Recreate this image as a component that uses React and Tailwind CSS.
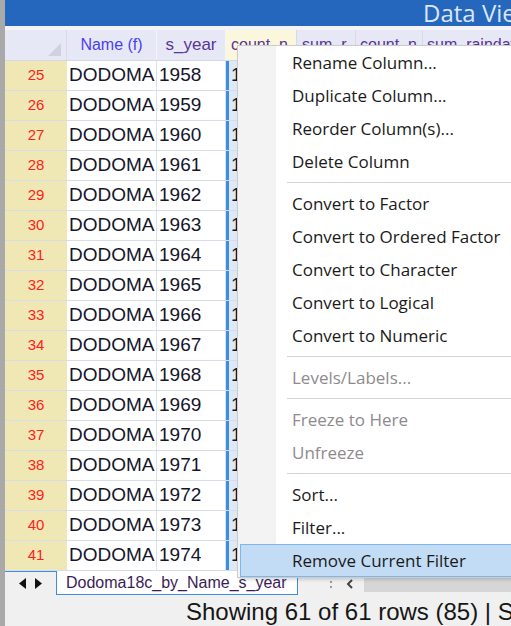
import React from 'react';

const rows = Array.from({ length: 17 }, (_, i) => ({ n: 25 + i, year: 1958 + i }));

// menu groups, separated by a line
const menuGroups = [
  [
    { label: 'Rename Column...' },
    { label: 'Duplicate Column...' },
    { label: 'Reorder Column(s)...' },
    { label: 'Delete Column' },
  ],
  [
    { label: 'Convert to Factor' },
    { label: 'Convert to Ordered Factor' },
    { label: 'Convert to Character' },
    { label: 'Convert to Logical' },
    { label: 'Convert to Numeric' },
  ],
  [{ label: 'Levels/Labels...', disabled: true }],
  [
    { label: 'Freeze to Here', disabled: true },
    { label: 'Unfreeze', disabled: true },
  ],
  [
    { label: 'Sort...' },
    { label: 'Filter...' },
    { label: 'Remove Current Filter', active: true },
  ],
];

function ContextMenu() {
  return (
    <div className="absolute left-[237px] top-[45px] w-[300px] border border-[#cccccc] bg-white font-['Open_Sans',sans-serif] text-[17px] shadow-[2px_2px_3px_rgba(0,0,0,0.15)]">
      <div className="relative">
        <div className="absolute inset-y-0 left-0 w-[38px] bg-[#f3f3f3]" />
        {menuGroups.map((group, gi) => (
          <div key={gi} className="relative">
            {gi > 0 && (
              <div className="flex h-[9px] items-center pl-[49px]">
                <div className="h-px w-full bg-[#d4d4d4]" />
              </div>
            )}
            {group.map((item) => (
              <div
                key={item.label}
                className={`mx-[2px] flex h-[33px] items-center border pl-[51px] ${
                  item.active ? 'border-[#7fb6ea] bg-[#c3dcf5]' : 'border-transparent'
                } ${item.disabled ? 'text-[#8e8a8e]' : 'text-[#1a1a1a]'}`}
              >
                {item.label}
              </div>
            ))}
          </div>
        ))}
      </div>
    </div>
  );
}

export default function App() {
  return (
    <div className="relative flex h-[626px] w-[511px] overflow-hidden bg-[#f0f0f0] font-['Liberation_Sans',Arial,sans-serif]">
      <div className="w-[5px] shrink-0 bg-[#a9a9a9]" />
      <div className="flex min-w-0 flex-1 flex-col">
        {/* title bar */}
        <div className="flex h-[26px] items-center whitespace-nowrap bg-[#2567bd] pl-[418px] font-['Open_Sans',sans-serif] text-[24px] text-[#dbe6f6]">
          Data View
        </div>
        <div className="h-[4px] bg-[#f4f4f8]" />

        {/* column headers */}
        <div className="flex h-[31px] whitespace-nowrap border-b border-[#d3d8e8] bg-[#e6e8f6] text-[16px]">
          <div className="relative w-[62px] shrink-0 border-r border-[#d6daea]">
            <div className="absolute bottom-[4px] right-[5px] h-0 w-0 border-b-[13px] border-l-[13px] border-b-[#cfd1dc] border-l-transparent" />
          </div>
          <div className="flex w-[90px] shrink-0 items-center justify-center border-r border-[#f5f6fb] text-[#4a3ff0]">Name (f)</div>
          <div className="flex w-[69px] shrink-0 items-center justify-center border-r border-[#f5f6fb] text-[17px] text-[#5c3396]">s_year</div>
          <div className="flex w-[70px] shrink-0 items-center bg-[#fbf7dc] pl-[5px] text-[#5c3396]">count_n</div>
          <div className="flex w-[59px] shrink-0 items-center border-l border-[#d6daea] pl-[5px] text-[#5c3396]">sum_r</div>
          <div className="flex w-[67px] shrink-0 items-center border-l border-[#d6daea] pl-[4px] text-[#5c3396]">count_n</div>
          <div className="flex flex-1 items-center border-l border-[#d6daea] pl-[4px] text-[#5c3396]">sum_raindays</div>
        </div>

        {/* data rows */}
        <div className="flex flex-col">
          {rows.map((r) => (
            <div key={r.n} className="flex h-[30px] whitespace-nowrap border-b border-[#d7dce9] bg-white">
              <div className="flex w-[62px] shrink-0 items-center justify-center bg-[#efe8b4] text-[15px] text-[#ff2020]">
                {r.n}
              </div>
              <div className="flex w-[90px] shrink-0 items-center overflow-hidden border-r border-[#dde1ec] pl-[2px] text-[19px] text-[#15152a]">
                DODOMA
              </div>
              <div className="flex w-[69px] shrink-0 items-center border-r border-[#dde1ec] pl-[2px] text-[19px] text-[#15152a]">
                {r.year}
              </div>
              <div className="flex w-[70px] shrink-0 items-center border-l-[3px] border-[#3c8ee2] bg-[#dde9f7] pl-[2px] text-[19px] text-[#15152a]">
                1
              </div>
              <div className="flex-1" />
            </div>
          ))}
        </div>

        {/* sheet tabs + horizontal scroll */}
        <div className="flex h-[26px] items-stretch">
          <div className="flex w-[51px] shrink-0 items-center justify-center gap-[9px] border-t border-[#3c8ee2] pb-[2px]">
            <svg width="7" height="11" viewBox="0 0 7 11"><path d="M7 0L0 5.5 7 11z" fill="#111" /></svg>
            <svg width="7" height="11" viewBox="0 0 7 11"><path d="M0 0L7 5.5 0 11z" fill="#111" /></svg>
          </div>
          <div className="mb-[2px] flex w-[242px] shrink-0 items-center border-x border-b border-[#3c8ee2] bg-white pl-[9px] text-[16px] text-[#3b1d55]">
            Dodoma18c_by_Name_s_year
          </div>
          <div className="flex w-[66px] shrink-0 items-center pl-[32px]">
            <div className="flex flex-col gap-[3px]">
              <div className="h-[2px] w-[2px] bg-[#9a9a9a]" />
              <div className="h-[2px] w-[2px] bg-[#9a9a9a]" />
            </div>
            <svg className="ml-[14px]" width="8" height="10" viewBox="0 0 8 10"><path d="M6 1L2 5l4 4" stroke="#444" strokeWidth="2" fill="none" /></svg>
          </div>
          <div className="my-[5px] flex-1 bg-[#d6d6d6]" />
        </div>

        {/* status */}
        <div className="flex h-[29px] items-center whitespace-nowrap pl-[181px] text-[24px] text-[#161616]">
          Showing 61 of 61 rows (85) | Showing 7 columns
        </div>
      </div>

      <ContextMenu />
    </div>
  );
}
